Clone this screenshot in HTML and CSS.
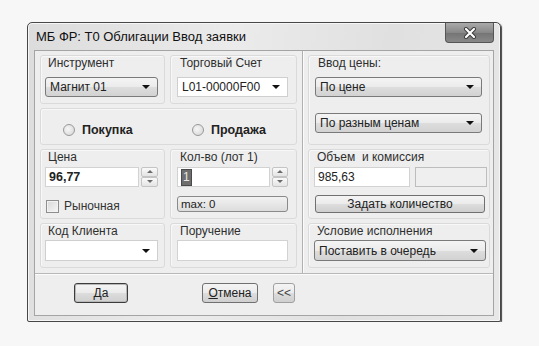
FILE: index.html
```html
<!DOCTYPE html>
<html lang="ru">
<head>
    <meta charset="UTF-8">
    <title>МБ ФР: Т0 Облигации Ввод заявки</title>
    <link rel="stylesheet" href="styles.css">
</head>
<body>
    <div class="window">
        <div class="titlebar">
            <span class="title">МБ ФР: Т0 Облигации Ввод заявки</span>
            <div class="close">
                <svg width="14" height="12" viewBox="0 0 14 12">
                    <path d="M3 2 L11 10 M11 2 L3 10" stroke="#3a3a3a" stroke-width="4" stroke-linecap="round"/>
                    <path d="M3 2 L11 10 M11 2 L3 10" stroke="#ffffff" stroke-width="2.2" stroke-linecap="round"/>
                </svg>
            </div>
        </div>

        <div class="client">
            <div class="main">
                <!-- left part: instrument, account, side, price, qty, client -->
                <div class="left">
                    <div class="group">
                        <div class="label">Инструмент</div>
                        <div class="combo"><span>Магнит 01</span><i class="arrow"></i></div>
                    </div>
                    <div class="group g2">
                        <div class="label">Торговый Счет</div>
                        <div class="combo edit"><span>L01-00000F00</span><i class="arrow"></i></div>
                    </div>

                    <div class="group sides">
                        <div class="radio first"><i class="dot"></i>Покупка</div>
                        <div class="radio"><i class="dot"></i>Продажа</div>
                    </div>

                    <div class="group">
                        <div class="label">Цена</div>
                        <div class="spin-row">
                            <div class="input strong">96,77</div>
                            <div class="spinner"><i class="up"></i><i class="down"></i></div>
                        </div>
                        <div class="check"><i class="box"></i>Рыночная</div>
                    </div>
                    <div class="group g2">
                        <div class="label">Кол-во (лот 1)</div>
                        <div class="spin-row">
                            <div class="input"><span class="sel">1</span></div>
                            <div class="spinner narrow"><i class="up"></i><i class="down"></i></div>
                        </div>
                        <div class="maxbox">max: 0</div>
                    </div>

                    <div class="group">
                        <div class="label">Код Клиента</div>
                        <div class="combo edit low"><span></span><i class="arrow"></i></div>
                    </div>
                    <div class="group g2">
                        <div class="label">Поручение</div>
                        <div class="input low"></div>
                    </div>
                </div>

                <div class="vsep"></div>

                <!-- right part: price mode, volume, execution -->
                <div class="right">
                    <div class="group r1">
                        <div class="label">Ввод цены:</div>
                        <div class="combo"><span>По цене</span><i class="arrow"></i></div>
                        <div class="combo second"><span>По разным ценам</span><i class="arrow"></i></div>
                    </div>
                    <div class="group r2">
                        <div class="label">Объем&nbsp; и комиссия</div>
                        <div class="vol-row">
                            <div class="input vol">985,63</div>
                            <div class="input off"></div>
                        </div>
                        <div class="button wide">Задать количество</div>
                    </div>
                    <div class="group r3">
                        <div class="label">Условие исполнения</div>
                        <div class="combo low"><span>Поставить в очередь</span><i class="arrow"></i></div>
                    </div>
                </div>
            </div>

            <div class="footer">
                <div class="button ok"><u>Д</u>а</div>
                <div class="button cancel"><u>О</u>тмена</div>
                <div class="button more">&lt;&lt;</div>
            </div>
        </div>
    </div>
</body>
</html>
```

FILE: styles.css
```css
body {
    margin: 0;
    background-color: #f7f7f7;
    font-family: "Liberation Sans", Arial, sans-serif;
    font-size: 12px;
    color: #222;
}

.window {
    margin: 22px 0 0 27px;
    width: 474px;
    height: 300px;
    box-sizing: border-box;
    border: 1px solid #474747;
    border-radius: 5px 5px 2px 2px;
    background: linear-gradient(100deg, #dcdcdc 0%, #ebebeb 40%, #e0e0e0 70%, #e8e8e8 100%);
    box-shadow: inset 0 0 0 1px #f6f6f6, 1px 1px 1px #444;
    display: flex;
    flex-direction: column;
}

.titlebar {
    height: 27px;
    display: flex;
    padding-left: 8px;
}
.title {
    line-height: 28px;
    font-size: 13px;
    color: #111;
}
.close {
    margin: 0 6px 0 auto;
    width: 49px;
    height: 20px;
    box-sizing: border-box;
    border: 1px solid #555;
    border-top: none;
    border-radius: 0 0 4px 4px;
    background: linear-gradient(#aaaaaa, #888888 50%, #747474 51%, #888888);
    display: flex;
    align-items: center;
    justify-content: center;
}

.client {
    margin: 0 6px 5px 6px;
    flex: 1;
    border: 1px solid #a4a4a4;
    background-color: #eeeeee;
    display: flex;
    flex-direction: column;
}

.main {
    height: 222px;
    display: flex;
}

.left {
    width: 267px;
    box-sizing: border-box;
    padding: 4px 4px 0 5px;
    display: grid;
    grid-template-columns: 125px 127px;
    grid-template-rows: 49px 37px 70px 45px;
    gap: 4px 5px;
}
.vsep {
    width: 0;
    border-left: 1px solid #b0b0b0;
    border-right: 1px solid #fbfbfb;
}
.right {
    flex: 1;
    padding: 4px 3px 0 4px;
    display: grid;
    grid-template-rows: 90px 70px 45px;
    gap: 4px;
}

.group {
    box-sizing: border-box;
    border: 1px solid #dadada;
    border-radius: 3px;
    box-shadow: inset 1px 1px 0 #f8f8f8;
    padding: 0 6px 0 4px;
    display: flex;
    flex-direction: column;
}
.group.g2 {
    padding: 0 8px 0 6px;
}
.group.r1 {
    padding: 0 7px 0 6px;
}
.group.r2 {
    padding: 0 2px 0 5px;
}
.group.r3 {
    padding: 0 3px 0 5px;
}

.label {
    line-height: 14px;
    padding-left: 3px;
    color: #2e2e2e;
}

.combo {
    margin-top: 7px;
    height: 20px;
    box-sizing: border-box;
    border: 1px solid #7a7a7a;
    border-radius: 3px;
    background: linear-gradient(#f4f4f4, #ebebeb 50%, #dddddd 51%, #d2d2d2);
    display: flex;
    align-items: center;
    padding: 0 7px 0 4px;
}
.combo span {
    flex: 1;
}
.combo.edit {
    border: 1px solid #cfcfcf;
    border-radius: 0;
    background: #ffffff;
}
.combo.second {
    margin-top: 16px;
}
.combo.low {
    margin-top: 2px;
    height: 21px;
}
.arrow {
    width: 0;
    height: 0;
    border-left: 4px solid transparent;
    border-right: 4px solid transparent;
    border-top: 4px solid #111;
}

.sides {
    grid-column: 1 / 3;
    flex-direction: row;
    align-items: center;
    padding: 6px 0 0 22px;
    font-weight: bold;
    font-size: 12.5px;
}
.radio {
    display: flex;
    align-items: center;
    gap: 7px;
}
.radio.first {
    width: 129px;
}
.dot {
    width: 12px;
    height: 12px;
    box-sizing: border-box;
    border: 1px solid #999;
    border-radius: 50%;
    background: radial-gradient(circle at 40% 40%, #f6f6f6, #d4d4d4);
}

.input {
    height: 20px;
    box-sizing: border-box;
    border: 1px solid #d2d2d2;
    background: #ffffff;
    padding: 0 3px;
    line-height: 18px;
}
.input.strong {
    font-weight: bold;
    font-size: 12.5px;
}
.input.low {
    margin-top: 2px;
    height: 21px;
}
.sel {
    display: inline-block;
    background: #6e6e6e;
    color: #e6e6e6;
    line-height: 15px;
    padding: 0 1px;
    margin-top: 1px;
    border: 1px solid #4a4a4a;
}

.spin-row {
    margin-top: 3px;
    display: flex;
    gap: 2px;
}
.spin-row .input {
    flex: 1;
}
.spinner {
    width: 17px;
    height: 20px;
    display: flex;
    flex-direction: column;
}
.spinner.narrow {
    width: 16px;
}
.spinner i {
    flex: 1;
    border: 1px solid #c4c4c4;
    border-radius: 2px;
    background: linear-gradient(#fafafa, #e4e4e4);
    position: relative;
}
.spinner i::after {
    content: "";
    position: absolute;
    left: 50%;
    top: 50%;
    margin: -2px 0 0 -3px;
    border-left: 3px solid transparent;
    border-right: 3px solid transparent;
}
.spinner .up::after {
    border-bottom: 3px solid #6a6a6a;
}
.spinner .down::after {
    border-top: 3px solid #6a6a6a;
}

.check {
    margin-top: 12px;
    display: flex;
    align-items: center;
    gap: 5px;
    padding-left: 1px;
    color: #333;
}
.box {
    width: 13px;
    height: 13px;
    box-sizing: border-box;
    border: 1px solid #8e8e8e;
    background: linear-gradient(135deg, #d8d8d8, #f6f6f6);
    box-shadow: inset 0 0 0 1px #f2f2f2;
}

.maxbox {
    margin-top: 9px;
    height: 16px;
    box-sizing: border-box;
    border: 1px solid #8a8a8a;
    border-radius: 3px;
    background: linear-gradient(#f2f2f2, #dcdcdc);
    line-height: 14px;
    padding-left: 3px;
    font-size: 11.5px;
}

.vol-row {
    margin-top: 3px;
    display: flex;
    gap: 5px;
}
.input.vol {
    width: 96px;
}
.input.off {
    flex: 1;
    background: #efefef;
    border-color: #bdbdbd;
}

.button {
    box-sizing: border-box;
    border: 1px solid #707070;
    border-radius: 3px;
    background: linear-gradient(#f4f4f4, #ebebeb 50%, #dddddd 51%, #cfcfcf);
    display: flex;
    align-items: center;
    justify-content: center;
}
.button.wide {
    margin: 8px 2px 0 1px;
    height: 18px;
}

.footer {
    flex: 1;
    border-top: 1px solid #b8b8b8;
    box-shadow: inset 0 1px 0 #fbfbfb;
    display: flex;
    align-items: flex-start;
    padding: 9px 0 0 39px;
}
.footer .button {
    height: 20px;
}
.button.ok {
    width: 54px;
    border-color: #3c3c3c;
    box-shadow: inset 0 0 0 1px #b8b8b8;
}
.button.cancel {
    width: 56px;
    margin-left: 74px;
}
.button.more {
    width: 22px;
    margin-left: 15px;
    border-color: #a0a0a0;
    color: #444;
}
```
